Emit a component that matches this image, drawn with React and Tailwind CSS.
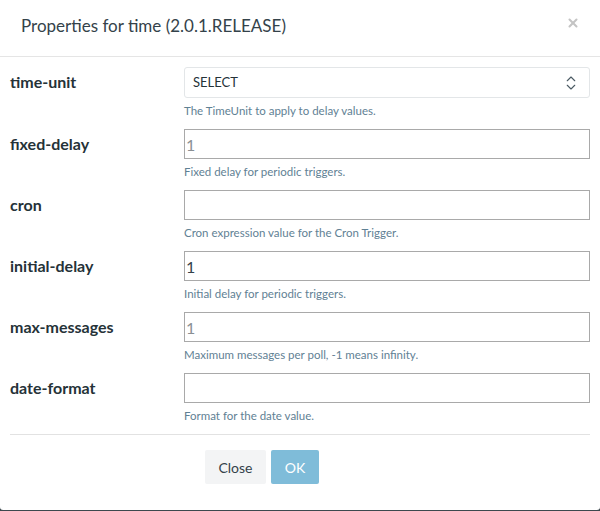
import { ChevronsUpDown, X } from 'lucide-react';

const fields = [
    { name: 'time-unit', type: 'select', help: 'The TimeUnit to apply to delay values.' },
    { name: 'fixed-delay', placeholder: '1', help: 'Fixed delay for periodic triggers.' },
    { name: 'cron', help: 'Cron expression value for the Cron Trigger.' },
    { name: 'initial-delay', value: '1', help: 'Initial delay for periodic triggers.' },
    { name: 'max-messages', placeholder: '1', help: 'Maximum messages per poll, -1 means infinity.' },
    { name: 'date-format', help: 'Format for the date value.' },
];

const Field = ({ field }) => (
    <div className="flex mb-[10px]">
        <label className="w-[174px] h-[30px] flex items-center text-[16px] font-bold text-[#253238]">
            {field.name}
        </label>
        <div className="flex-1">
            {field.type === 'select' ? (
                <div className="h-[31px] border border-[#e3e6e8] rounded-[3px] flex items-center justify-between pl-[8px] pr-[9px] text-[13px] text-[#253238]">
                    <span>SELECT</span>
                    <ChevronsUpDown size={18} strokeWidth={1.5} className="text-[#4b5a63]" />
                </div>
            ) : (
                <input
                    readOnly
                    defaultValue={field.value}
                    placeholder={field.placeholder}
                    className="block w-full h-[30px] border border-[#a9a9a9] px-[1px] text-[16px] font-normal text-[#34424a] placeholder:text-[#8a8f93] outline-none"
                />
            )}
            <p className="mt-[5px] text-[11.5px] leading-[16px] text-[#5f8194]">{field.help}</p>
        </div>
    </div>
);

const App = () => {
    return (
        <div className="w-[600px] h-[511px] bg-[#3d484e]" style={{ fontFamily: 'Lato, "Noto Sans", sans-serif' }}>
            <div className="h-[510px] bg-white rounded-b-[3px]">
                {/* Header */}
                <div className="h-[57px] border-b border-[#e5e5e5] flex items-center justify-between pl-[21px] pr-[20px]">
                    <h4 className="text-[17px] text-[#34424a] -mt-[5px]">Properties for time (2.0.1.RELEASE)</h4>
                    <X size={14} strokeWidth={3.5} className="text-[#c4c4c4] -mt-[10px]" />
                </div>

                {/* Body */}
                <div className="px-[10px] pt-[10px]">
                    {fields.map((f) => (
                        <Field key={f.name} field={f} />
                    ))}
                </div>

                {/* Footer */}
                <div className="mx-[10px] mt-[5px] border-t border-[#e2e2e2] pt-[15px] pl-[195px] flex gap-[5px]">
                    <button className="w-[61px] h-[34px] bg-[#f3f4f5] rounded-[2px] text-[14px] text-[#34424a]">Close</button>
                    <button className="w-[48px] h-[34px] bg-[#7fbcd9] rounded-[2px] text-[14px] text-white">OK</button>
                </div>
            </div>
        </div>
    );
};

export default App;
